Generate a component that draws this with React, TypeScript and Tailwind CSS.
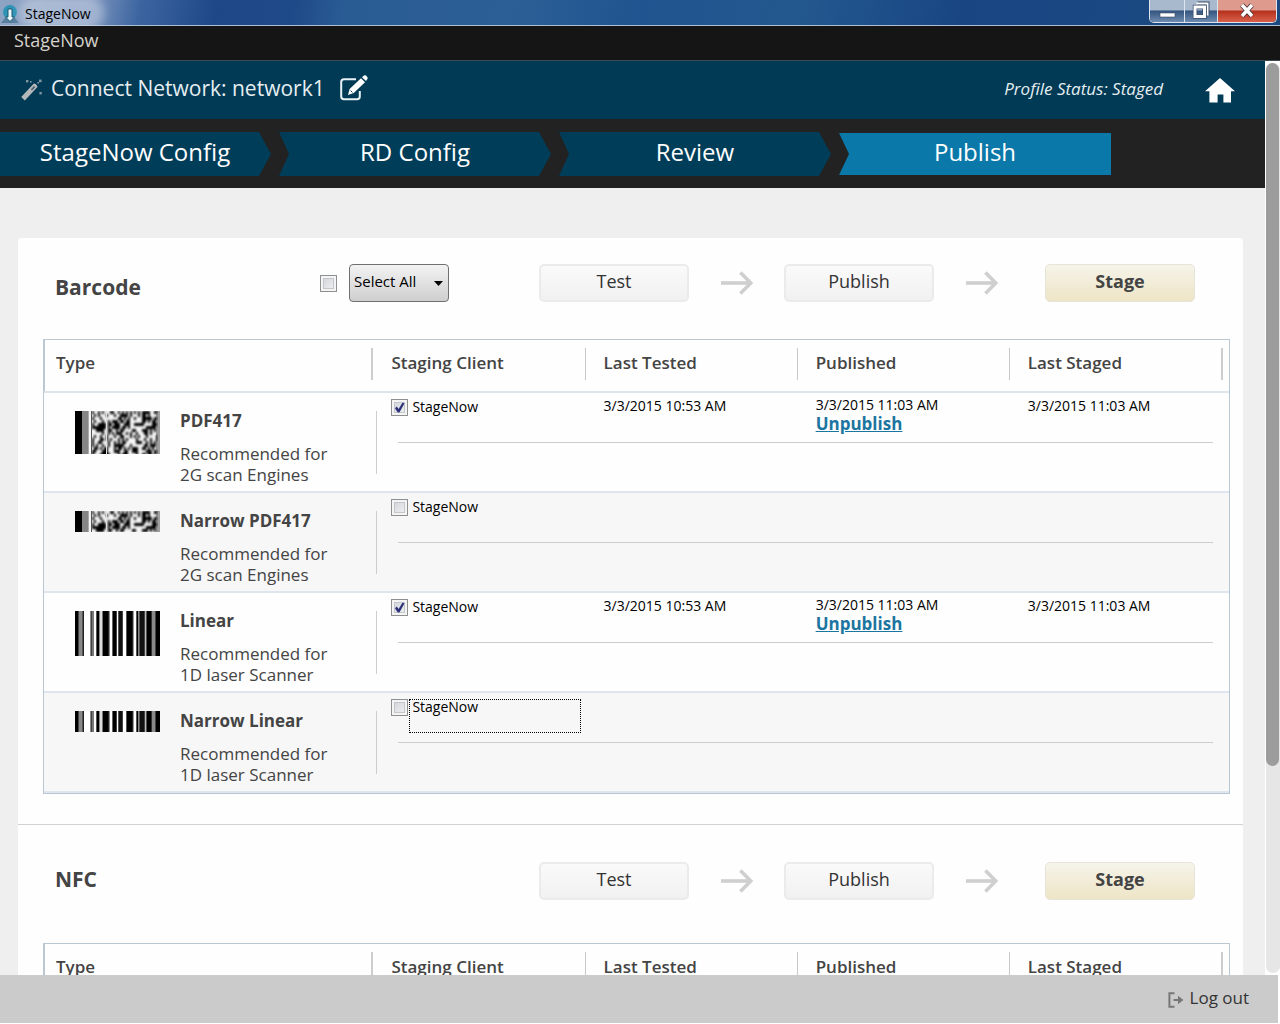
import React from "react";

type Row = {
  name: string;
  note: [string, string];
  art: "matrix" | "lines";
  narrow: boolean;
  checked: boolean;
  focused?: boolean;
  tested?: string;
  published?: string;
  staged?: string;
};

const rows: Row[] = [
  { name: "PDF417", note: ["Recommended for", "2G scan Engines"], art: "matrix", narrow: false, checked: true, tested: "3/3/2015 10:53 AM", published: "3/3/2015 11:03 AM", staged: "3/3/2015 11:03 AM" },
  { name: "Narrow PDF417", note: ["Recommended for", "2G scan Engines"], art: "matrix", narrow: true, checked: false },
  { name: "Linear", note: ["Recommended for", "1D laser Scanner"], art: "lines", narrow: false, checked: true, tested: "3/3/2015 10:53 AM", published: "3/3/2015 11:03 AM", staged: "3/3/2015 11:03 AM" },
  { name: "Narrow Linear", note: ["Recommended for", "1D laser Scanner"], art: "lines", narrow: true, checked: false, focused: true },
];

const stripes: [number, number, string][] = [
  [0, 3, "#000"], [3, 1, "#444"], [4, 3, "#888"], [7, 1, "#555"], [8, 1, "#222"],
  [15, 1, "#888"], [16, 1, "#444"], [17, 2, "#777"],
  [21, 1, "#555"], [22, 2, "#000"], [24, 1, "#888"], [25, 2, "#ddd"], [27, 1, "#777"],
  [28, 5, "#000"], [33, 1, "#222"], [34, 1, "#888"], [37, 1, "#666"], [38, 3, "#000"], [41, 1, "#444"],
  [43, 1, "#555"], [44, 3, "#111"], [47, 1, "#444"], [51, 1, "#555"], [52, 5, "#000"], [57, 1, "#222"], [58, 1, "#999"],
  [61, 1, "#555"], [62, 1, "#000"], [63, 1, "#888"], [64, 1, "#555"], [65, 4, "#111"], [69, 1, "#444"], [70, 1, "#bbb"], [71, 1, "#555"],
  [72, 4, "#000"], [76, 1, "#333"], [77, 3, "#888"], [80, 1, "#444"], [81, 4, "#000"],
];

function Lines({ height }: { height: number }) {
  return (
    <svg width="85" height={height} viewBox={`0 0 85 ${height}`} shapeRendering="crispEdges" aria-hidden="true">
      <rect width="85" height={height} fill="#fff" />
      {stripes.map(([x, w, c]) => (
        <rect key={x} x={x} width={w} height={height} fill={c} />
      ))}
    </svg>
  );
}

function Matrix({ height }: { height: number }) {
  const id = `soft-${height}`;
  let seed = 37;
  const next = () => {
    seed = (seed * 1103515245 + 12345) % 2147483648;
    return seed / 2147483648;
  };
  const cells: React.ReactNode[] = [];
  for (let y = 0; y < height; y += 3) {
    for (let x = 17; x < 82; x += 2) {
      if (next() < 0.5) cells.push(<rect key={`${x}-${y}`} x={x} y={y} width={2} height={3} fill="#000" />);
    }
  }
  return (
    <svg width="85" height={height} viewBox={`0 0 85 ${height}`} aria-hidden="true">
      <filter id={id} x="0" y="0" width="1" height="1"><feGaussianBlur stdDeviation="1" /></filter>
      <rect width="85" height={height} fill="#f4f4f4" />
      <g filter={`url(#${id})`}>{cells}</g>
      <rect width="7" height={height} fill="#000" />
      <rect x="7" width="6" height={height} fill="#858585" />
      <rect x="13" width="1" height={height} fill="#aaa" />
      <rect x="16" width="1" height={height} fill="#555" />
      <rect x="31" width="1" height={height} fill="#ddd" />
      <rect x="81" width="4" height={height} fill="#666" fillOpacity="0.6" />
    </svg>
  );
}

function CheckBox(props: { id: string; label?: string; checked?: boolean }) {
  return (
    <span className="grid size-[17px] shrink-0">
      <input
        id={props.id}
        type="checkbox"
        aria-label={props.label}
        defaultChecked={props.checked}
        className="peer col-start-1 row-start-1 size-[17px] appearance-none border border-[#8e8f8f] bg-linear-to-br from-[#cbcfd5] to-[#f6f6f6] shadow-[inset_0_0_0_2px_#f4f4f4,inset_0_0_0_3px_#c3c7cc]"
      />
      <svg viewBox="0 0 17 17" className="pointer-events-none col-start-1 row-start-1 hidden size-[17px] peer-checked:block" aria-hidden="true">
        <path d="M4 9.2 L5.8 7.6 L7.6 10 L11.6 3.6 L13.4 4.4 L8.4 13.4 L6.6 13.2 Z" fill="#2b2f78" />
      </svg>
    </span>
  );
}

function Arrow() {
  return (
    <svg width="33" height="24" viewBox="0 0 33 24" fill="none" stroke="#cfcfcf" strokeWidth="3.6" className="mx-[31px] shrink-0" aria-hidden="true">
      <path d="M1 12 H30.4" />
      <path d="M20.4 1.6 L30.8 12 L20.4 22.4" />
    </svg>
  );
}

function Actions() {
  const plain = "h-[38px] w-[150px] rounded-[5px] border-2 border-[#ebebeb] bg-linear-to-b from-[#fafafa] to-[#f1f1f1] pb-1 text-lg leading-6 text-[#333]";
  return (
    <div className="ml-auto mr-12 flex items-center">
      <button className={plain}>Test</button>
      <Arrow />
      <button className={plain}>Publish</button>
      <Arrow />
      <button className="ml-4 h-[38px] w-[150px] rounded-[5px] border border-[#e6e3d8] bg-linear-to-b from-[#f6f4ea] to-[#eee5c6] pb-1 text-lg leading-6 font-bold text-[#444]">
        Stage
      </button>
    </div>
  );
}

function Head() {
  const th = "p-0 text-left align-top text-[17px] leading-6 font-semibold text-[#444]";
  const inner = "mt-2 mb-[11px] flex h-8 items-center border-r border-[#c8c8c8] pb-[2px] pl-[18px]";
  return (
    <>
      <colgroup>
        <col className="w-[27.8%]" />
        <col className="w-[17.9%]" />
        <col className="w-[17.9%]" />
        <col className="w-[17.9%]" />
        <col />
      </colgroup>
      <thead>
        <tr className="border-b-2 border-[#dde4ea]">
          <th className={th}>
            <div className="border-l border-[#bcc9d3] pt-2 pb-[11px]">
              <div className="flex h-8 items-center border-r-2 border-[#cdcdcd] pb-[2px] pl-[11px]">Type</div>
            </div>
          </th>
          <th className={th}><div className={inner}>Staging Client</div></th>
          <th className={th}><div className={inner}>Last Tested</div></th>
          <th className={th}><div className={inner}>Published</div></th>
          <th className={th}>
            <div className="mt-2 mr-[6px] mb-[11px] flex h-8 items-center border-r-2 border-[#cdcdcd] pb-[2px] pl-[18px]">Last Staged</div>
          </th>
        </tr>
      </thead>
    </>
  );
}

function BarcodeTable() {
  const cell = "h-[50px] border-b border-[#cdcdcd] pl-[18px] pt-[3px] text-sm leading-5 text-black";
  return (
    <div className="ml-[25px] mr-[13px] border border-[#b9c7d3]">
      <table className="w-full table-fixed border-collapse">
        <Head />
        <tbody>
          {rows.map((r, i) => (
            <tr key={r.name} className={i % 2 ? "h-[100px] border-b-2 border-[#dfe5ee] bg-[#f7f7f7]" : "h-[100px] border-b-2 border-[#dfe5ee] bg-[#fefefe]"}>
              <td className="p-0 align-top">
                <div className="flex pl-[31px] pt-[18px]">
                  {r.art === "matrix" ? <Matrix height={r.narrow ? 21 : 43} /> : <Lines height={r.narrow ? 21 : 45} />}
                  <div className="ml-5 text-[17px] leading-[21px] text-[#444]">
                    <div className="-mt-px mb-3 font-bold">{r.name}</div>
                    <div>{r.note[0]}</div>
                    <div>{r.note[1]}</div>
                  </div>
                </div>
              </td>
              <td className="p-0 align-top">
                <div className="flex">
                  <div className="mt-[18px] ml-[3px] h-[63px] w-px bg-[#cdcdcd]" />
                  <div className="flex-1">
                    <div className="flex h-[49px] pt-[6px] pl-[14px]">
                      <CheckBox id={`client-${i}`} checked={r.checked} />
                      <label
                        htmlFor={`client-${i}`}
                        className={r.focused ? "ml-[1px] h-[34px] w-[172px] border border-dotted border-black pl-[2px] text-sm leading-[14px] text-black" : "ml-[1px] h-[34px] w-[172px] border border-transparent pl-[2px] text-sm leading-[14px] text-black"}
                      >
                        StageNow
                      </label>
                    </div>
                    <div className="ml-[21px] h-px bg-[#cdcdcd]" />
                  </div>
                </div>
              </td>
              <td className="p-0 align-top"><div className={cell}>{r.tested}</div></td>
              <td className="p-0 align-top">
                <div className="h-[50px] border-b border-[#cdcdcd] pl-[18px] pt-[2px] text-sm leading-[19px] text-black">
                  {r.published}
                  {r.published && (
                    <a href="#unpublish" className="block text-[17px] leading-[19px] font-bold text-[#1b75a0] underline">Unpublish</a>
                  )}
                </div>
              </td>
              <td className="p-0 align-top"><div className="mr-4"><div className={cell}>{r.staged}</div></div></td>
            </tr>
          ))}
        </tbody>
      </table>
    </div>
  );
}

function TitleBar() {
  return (
    <header className="flex h-[26px] shrink-0 items-start border-b border-[#aebfd4] bg-[linear-gradient(100deg,#8ea4c4_0%,#7f97bf_7%,#3c65a0_11%,#1e4788_17%,#1f4a89_23%,#2a5c94_27%,#2c5f95_40%,#1f5490_50%,#23588e_62%,#194683_75%,#1c4a80_100%)]">
      <div className="flex h-[25px] flex-1 items-center">
        <svg width="20" height="24" viewBox="0 0 20 24" aria-hidden="true">
          <circle cx="10" cy="11" r="7" fill="#2f93b4" />
          <path d="M1 22 L5 17 H15 L19 22 Z" fill="#577f9e" />
          <path d="M8 8 H12 V16 H14.5 L10 20.5 L5.5 16 H8 Z" fill="#eef8fb" stroke="#1c5872" strokeWidth="1" />
        </svg>
        <span className="ml-[5px] rounded-full bg-white/30 pt-[2px] pr-2 text-sm leading-5 text-black shadow-[0_0_9px_6px_rgba(255,255,255,0.3)]">StageNow</span>
      </div>
      <div className="mr-[3px] flex h-[23px] overflow-hidden rounded-b-[5px] border border-t-0 border-[#dbe4ef]">
        <button aria-label="Minimize" className="flex w-[35px] items-center justify-center border-r border-[#dbe4ef] bg-linear-to-b from-[#a9b9cd] from-45% via-[#33557f] via-50% to-[#6f8cb0]">
          <svg width="17" height="20" viewBox="0 0 17 20" aria-hidden="true"><rect x="1" y="12" width="15" height="4" fill="#fff" stroke="#3a4c66" strokeWidth="0.6" /></svg>
        </button>
        <button aria-label="Restore" className="flex w-[33px] items-center justify-center border-r border-[#dbe4ef] bg-linear-to-b from-[#a9b9cd] from-45% via-[#33557f] via-50% to-[#6f8cb0]">
          <svg width="18" height="20" viewBox="0 0 18 20" fill="none" aria-hidden="true">
            <path d="M5.5 2.5 H15.5 V13.5" stroke="#3a4c66" strokeWidth="4" />
            <path d="M4.5 2.5 H15.5 V14.5" stroke="#fff" strokeWidth="2" />
            <rect x="3" y="6" width="9.5" height="9.5" stroke="#3a4c66" strokeWidth="4.4" />
            <rect x="3" y="6" width="9.5" height="9.5" stroke="#fff" strokeWidth="3" />
          </svg>
        </button>
        <button aria-label="Close" className="flex w-[58px] items-center justify-center bg-linear-to-b from-[#dd9a8d] from-45% via-[#b5301c] via-50% to-[#d9604a]">
          <svg width="16" height="20" viewBox="0 0 16 20" fill="none" aria-hidden="true">
            <path d="M3 4 L13 15 M13 4 L3 15" stroke="#4a3038" strokeWidth="5" />
            <path d="M3 4 L13 15 M13 4 L3 15" stroke="#fff" strokeWidth="3.4" />
          </svg>
        </button>
      </div>
    </header>
  );
}

function ProfileBar() {
  return (
    <div className="flex h-[58px] items-center bg-[#003a54] pl-5 text-[#e6eef2]">
      <svg width="24" height="24" viewBox="0 0 24 24" fill="none" aria-hidden="true">
        <path d="M1.2 19 L13.4 6 Q14.4 5 15.6 6 L17 7.4 Q18 8.6 17 9.6 L4.8 22.6 Z" fill="#b5b8bb" />
        <path d="M11.4 12 L14.6 8.6" stroke="#4d6472" strokeWidth="1.8" />
        <g fill="#7f97a3">
          <rect x="6" y="2" width="2.4" height="2.4" />
          <rect x="10" y="3" width="1.6" height="1.6" />
          <rect x="19" y="1.6" width="2.6" height="2.6" />
          <rect x="17.4" y="4" width="1.6" height="1.6" />
          <rect x="19.4" y="14" width="2.4" height="2.4" />
        </g>
      </svg>
      <h1 className="ml-[7px] pb-1 text-[21px] leading-7">Connect Network: network1</h1>
      <button aria-label="Edit name" className="ml-[14px] pb-1">
        <svg width="30" height="28" viewBox="0 0 30 28" fill="none" aria-hidden="true">
          <path d="M17 5.2 H5 Q2.2 5.2 2.2 8 V22.4 Q2.2 25.2 5 25.2 H18 Q20.8 25.2 20.8 22.4 V17" stroke="#e9f2f5" strokeWidth="2" />
          <path d="M9 21 L10.6 15 L22 4.2 L26 8.2 L14.8 19 Z" fill="#fff" />
          <path d="M23 3.2 L25 1.4 Q26 0.8 27 1.6 L28.4 3.2 Q29.2 4 28.4 5 L27 7 Z" fill="#fff" />
          <path d="M11.6 16.6 L13.4 18.4" stroke="#003a54" strokeWidth="1" />
        </svg>
      </button>
      <span className="ml-auto pb-[2px] text-[17px] leading-6 italic">Profile Status: Staged</span>
      <a href="#home" aria-label="Home" className="mr-[30px] ml-[42px]">
        <svg width="30" height="26" viewBox="0 0 30 26" fill="#fff" aria-hidden="true">
          <path d="M15 1 L30 14.2 H26 V25.4 H18.4 V17.6 H12.6 V25.4 H4.4 V14.2 H0 Z" />
        </svg>
      </a>
    </div>
  );
}

function Steps() {
  const base = "flex h-11 w-[272px] shrink-0 items-center justify-center pb-1 text-2xl leading-8 text-white";
  return (
    <nav className="-ml-px flex h-[69px] items-start gap-2 overflow-hidden bg-[#222] pt-[13px]">
      <button className={`${base} bg-[#003d59] [clip-path:polygon(0_0,260px_0,100%_50%,260px_100%,0_100%)]`}>StageNow Config</button>
      <button className={`${base} bg-[#003d59] [clip-path:polygon(0_0,260px_0,100%_50%,260px_100%,0_100%,10px_50%)]`}>RD Config</button>
      <button className={`${base} bg-[#003d59] [clip-path:polygon(0_0,260px_0,100%_50%,260px_100%,0_100%,10px_50%)]`}>Review</button>
      <button className={`${base} bg-[#0a78a8] [clip-path:polygon(0_1px,100%_1px,100%_43px,0_43px,10px_50%)]`}>Publish</button>
    </nav>
  );
}

export default function App() {
  return (
    <div className="flex h-screen flex-col overflow-hidden bg-white font-['Open_Sans','Noto_Sans',sans-serif]">
      <TitleBar />
      <div className="h-[35px] shrink-0 border-b border-[#3b4a50] bg-[#151515] pt-[2px] pl-[14px] text-lg leading-6 text-[#d6d3cc]">StageNow</div>
      <div className="flex min-h-0 flex-1">
        <main className="min-w-0 flex-1 overflow-x-hidden overflow-y-auto bg-[#efefef] [scrollbar-width:none]">
          <ProfileBar />
          <Steps />
          <div className="mt-[50px] mr-[22px] ml-[18px] rounded-t-[4px] bg-[#fefefe]">
            <section className="border-b border-[#d2d2d2] pt-[26px] pb-[30px]">
              <div className="mb-[37px] flex items-center">
                <h2 className="w-[265px] pt-2 pl-[37px] text-[21px] leading-7 font-bold text-[#444]">Barcode</h2>
                <div className="ml-[37px] flex items-center gap-3">
                  <CheckBox id="all" label="Select all barcodes" />
                  <div className="grid items-center">
                    <select aria-label="Selection" className="col-start-1 row-start-1 h-[38px] w-[100px] appearance-none rounded-[4px] border border-[#707070] bg-linear-to-b from-[#f3f3f3] to-[#cfcfcf] pb-1 pl-1 text-[15px] text-black">
                      <option>Select All</option>
                    </select>
                    <svg width="9" height="5" viewBox="0 0 9 5" className="pointer-events-none col-start-1 row-start-1 mr-[6px] justify-self-end" aria-hidden="true"><path d="M0 0 H9 L4.5 5 Z" /></svg>
                  </div>
                </div>
                <Actions />
              </div>
              <BarcodeTable />
            </section>
            <section className="pt-[37px] pb-8">
              <div className="mb-[43px] flex items-center">
                <h2 className="pb-[5px] pl-[37px] text-[21px] leading-7 font-bold text-[#444]">NFC</h2>
                <Actions />
              </div>
              <div className="mr-[13px] ml-[25px] border border-[#b9c7d3]">
                <table className="w-full table-fixed border-collapse"><Head /></table>
              </div>
            </section>
          </div>
        </main>
        <div className="w-[15px] shrink-0 bg-white pt-[2px] pb-[2px] pl-px">
          <div className="h-full rounded-full bg-[#e6e6e6]">
            <div className="h-[77.3%] w-[13px] rounded-full bg-[#9c9c9c]" />
          </div>
        </div>
      </div>
      <footer className="mr-[2px] mb-px flex h-12 shrink-0 items-center justify-end bg-[#cbcbcb] pr-[29px]">
        <button className="flex items-center gap-[6px] pb-[2px] text-[17px] leading-6 text-[#333]">
          <svg width="16" height="16" viewBox="0 0 16 16" fill="none" stroke="#777" className="mt-[3px]" aria-hidden="true">
            <path d="M6.5 1.2 H1.4 V14.8 H6.5" strokeWidth="2" />
            <path d="M5.5 8 H11" strokeWidth="2" />
            <path d="M10 3.8 L15.4 8 L10 12.2 Z" fill="#777" stroke="none" />
          </svg>
          Log out
        </button>
      </footer>
    </div>
  );
}
